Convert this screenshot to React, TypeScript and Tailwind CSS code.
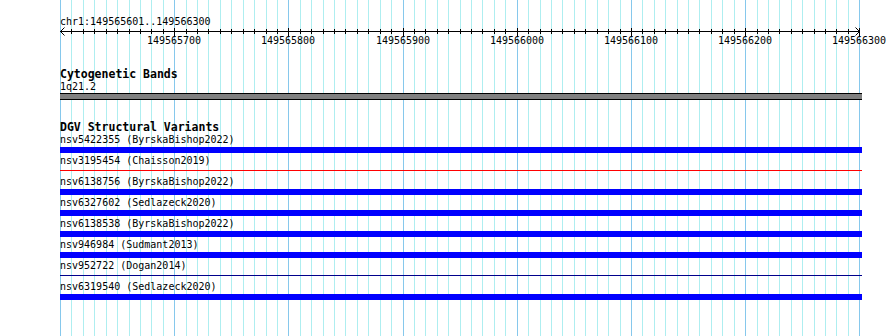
import React from "react";

const START = 149565600;
const PX_PER_10BP = 799.3 / 70;

const features = [
  { id: "nsv5422355", study: "ByrskaBishop2022", kind: "bar" },
  { id: "nsv3195454", study: "Chaisson2019", kind: "red" },
  { id: "nsv6138756", study: "ByrskaBishop2022", kind: "bar" },
  { id: "nsv6327602", study: "Sedlazeck2020", kind: "bar" },
  { id: "nsv6138538", study: "ByrskaBishop2022", kind: "bar" },
  { id: "nsv946984", study: "Sudmant2013", kind: "bar" },
  { id: "nsv952722", study: "Dogan2014", kind: "navy" },
  { id: "nsv6319540", study: "Sedlazeck2020", kind: "bar" },
];

const ticks = Array.from({ length: 71 }, (_, k) => ({
  k,
  x: Math.round(k * PX_PER_10BP),
  major: k % 10 === 0,
}));

function GridLines() {
  return (
    <svg
      className="absolute left-[60px] top-0 pointer-events-none"
      width={810}
      height={336}
    >
      {ticks.map((t) => (
        <rect
          key={t.k}
          x={t.x}
          y={0}
          width={1}
          height={336}
          fill={t.major ? "#86c8ec" : "#aeeef0"}
        />
      ))}
    </svg>
  );
}

function Ruler() {
  return (
    <svg width={830} height={20} className="block overflow-visible">
      <rect x={0} y={3} width={800} height={1} fill="#000" />
      <path d="M0.5 3.5 L4.5 -0.5 M0.5 3.5 L4.5 7.5" stroke="#000" strokeWidth={1} fill="none" />
      <path d="M799.5 3.5 L795.5 -0.5 M799.5 3.5 L795.5 7.5" stroke="#000" strokeWidth={1} fill="none" />
      {ticks.map((t) =>
        t.k === 0 ? null : (
          <rect
            key={t.k}
            x={t.x}
            y={t.major ? 0 : 1}
            width={1}
            height={t.major ? 8 : 5}
            fill="#000"
          />
        )
      )}
      {ticks
        .filter((t) => t.major && t.k > 0)
        .map((t) => (
          <text
            key={t.k}
            x={t.x}
            y={16}
            textAnchor="middle"
            fontSize={10}
            fontFamily="'DejaVu Sans Mono', monospace"
            fill="#000"
          >
            {START + t.k * 10}
          </text>
        ))}
    </svg>
  );
}

export default function App() {
  return (
    <div className="relative w-[890px] h-[336px] overflow-hidden bg-white text-black font-['DejaVu_Sans_Mono',monospace]">
      <GridLines />

      <div className="relative pl-[60px] pt-[16px]">
        {/* Ruler */}
        <div className="h-[12px] text-[10px] leading-[12px]">
          chr1:149565601..149566300
        </div>
        <Ruler />

        {/* Cytogenetic Bands */}
        <div className="mt-[19px] h-[14px] text-[11.5px] leading-[14px] font-bold">
          Cytogenetic Bands
        </div>
        <div className="h-[12px] text-[10px] leading-[12px]">1q21.2</div>
        <div className="w-[802px] h-[7px] bg-[#808080] border-y border-black" />

        {/* DGV Structural Variants */}
        <div className="mt-[21px] h-[13px] text-[11.5px] leading-[13px] font-bold">
          DGV Structural Variants
        </div>
        <div className="flex flex-col">
          {features.map((f) => (
            <div key={f.id} className="h-[21px] flex flex-col">
              <div className="h-[12px] text-[10px] leading-[12px] whitespace-pre">
                {f.id} ({f.study})
              </div>
              <div className="mt-[1px] h-[6px] w-[802px]">
                {f.kind === "bar" && <div className="h-[6px] bg-[#0000ff]" />}
                {f.kind === "red" && <div className="mt-[2px] h-px bg-[#ff0000]" />}
                {f.kind === "navy" && <div className="mt-[2px] h-px bg-[#00008b]" />}
              </div>
            </div>
          ))}
        </div>
      </div>
    </div>
  );
}
